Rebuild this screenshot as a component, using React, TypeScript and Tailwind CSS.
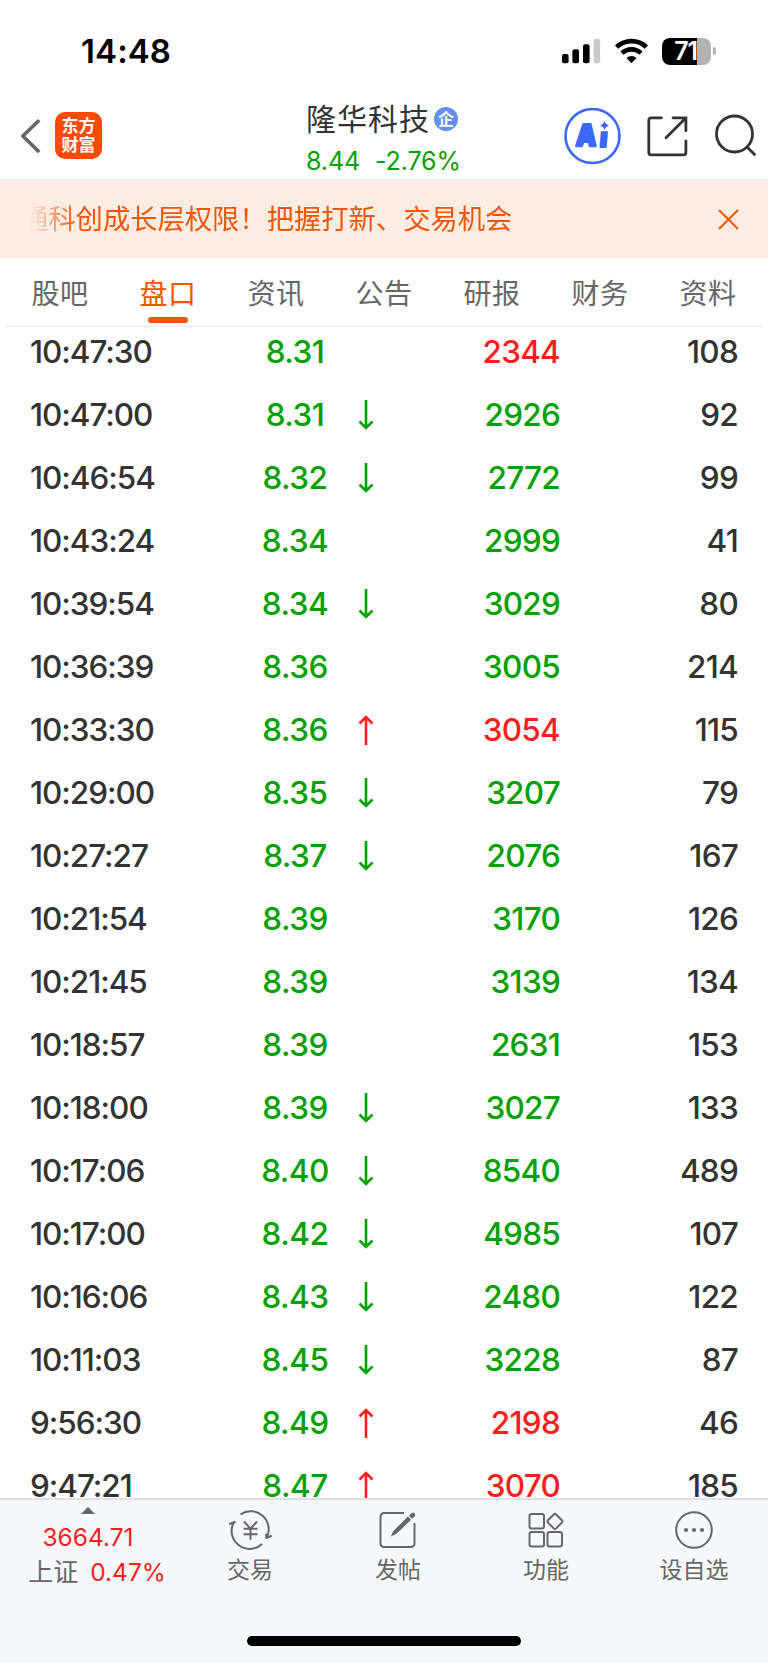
import clsx from "clsx";

type Direction = "up" | "down" | null;

interface Trade {
    time: string;
    price: string;
    direction: Direction;
    volume: string;
    isBuy?: boolean;
    count: string;
}

const trades: Trade[] = [
    { time: "10:47:30", price: "8.31", direction: null, volume: "2344", isBuy: true, count: "108" },
    { time: "10:47:00", price: "8.31", direction: "down", volume: "2926", count: "92" },
    { time: "10:46:54", price: "8.32", direction: "down", volume: "2772", count: "99" },
    { time: "10:43:24", price: "8.34", direction: null, volume: "2999", count: "41" },
    { time: "10:39:54", price: "8.34", direction: "down", volume: "3029", count: "80" },
    { time: "10:36:39", price: "8.36", direction: null, volume: "3005", count: "214" },
    { time: "10:33:30", price: "8.36", direction: "up", volume: "3054", isBuy: true, count: "115" },
    { time: "10:29:00", price: "8.35", direction: "down", volume: "3207", count: "79" },
    { time: "10:27:27", price: "8.37", direction: "down", volume: "2076", count: "167" },
    { time: "10:21:54", price: "8.39", direction: null, volume: "3170", count: "126" },
    { time: "10:21:45", price: "8.39", direction: null, volume: "3139", count: "134" },
    { time: "10:18:57", price: "8.39", direction: null, volume: "2631", count: "153" },
    { time: "10:18:00", price: "8.39", direction: "down", volume: "3027", count: "133" },
    { time: "10:17:06", price: "8.40", direction: "down", volume: "8540", count: "489" },
    { time: "10:17:00", price: "8.42", direction: "down", volume: "4985", count: "107" },
    { time: "10:16:06", price: "8.43", direction: "down", volume: "2480", count: "122" },
    { time: "10:11:03", price: "8.45", direction: "down", volume: "3228", count: "87" },
    { time: "9:56:30", price: "8.49", direction: "up", volume: "2198", isBuy: true, count: "46" },
    { time: "9:47:21", price: "8.47", direction: "up", volume: "3070", isBuy: true, count: "185" },
];

const tabs = ["股吧", "盘口", "资讯", "公告", "研报", "财务", "资料"];

function StatusBar() {
    return (
        <div className="h-24 shrink-0 flex items-start justify-between pl-[81px] pr-[52px] pt-[37px] text-black">
            <span className="text-[33px] leading-[29px] font-semibold tracking-[0.1px]">14:48</span>
            <div className="flex items-center h-7">
                <svg width="39" height="26" viewBox="0 0 39 26">
                    <rect x="0" y="16" width="6.6" height="9.3" rx="2" />
                    <rect x="10.4" y="11.3" width="6.6" height="14" rx="2" />
                    <rect x="21" y="6.2" width="6.6" height="19.1" rx="2" />
                    <rect x="31.5" y="1" width="6.6" height="24.3" rx="2" fill="#cbcbcb" />
                </svg>
                <svg className="ml-[14px]" width="33" height="26" viewBox="0 0 33 26" fill="none" stroke="black" strokeWidth="4.6">
                    <path d="M1.6 9.2a21.4 21.4 0 0 1 29.8 0" />
                    <path d="M7 15.2a13.6 13.6 0 0 1 19 0" />
                    <path d="M16.5 25.2l-5-5.2a7.3 7.3 0 0 1 10 0z" fill="black" stroke="none" />
                </svg>
                <div className="ml-[14px] w-[49px] h-[27px] rounded-[8px] bg-[linear-gradient(90deg,#000_35px,#b2b2b2_35px)] flex items-center justify-center">
                    <span className="text-white text-[25px] leading-[27px] font-semibold tracking-[-1.2px] -ml-[2px]">71</span>
                </div>
                <div className="ml-[2px] w-[3px] h-2 rounded-r-full bg-[#b2b2b2]" />
            </div>
        </div>
    );
}

function Header() {
    return (
        <header className="h-[85px] shrink-0 flex border-b-2 border-[#efeff2] text-[#333]">
            <div className="w-[306px] flex items-start pt-4 pl-5">
                <svg className="mt-1 mr-[13px]" width="22" height="40" viewBox="0 0 22 40" fill="none" stroke="#666" strokeWidth="3.6">
                    <path d="M19.2 4.3L2.8 20l16.4 16" strokeLinejoin="round" />
                </svg>
                <div className="w-[47px] h-[47px] rounded-[10px] bg-[#ff4a03] text-white text-[17px] leading-[19px] font-bold text-center pt-[5px]">
                    东方<br />财富
                </div>
            </div>
            <div className="w-[257px]">
                <div className="flex items-center pt-[2px]">
                    <h1 className="text-[30px] leading-[42px] tracking-[1px]">隆华科技</h1>
                    <span className="ml-1 size-6 rounded-full bg-[#6391eb] text-white text-[16px] leading-6 font-bold text-center">企</span>
                </div>
                <div className="flex gap-[15px] mt-[5px] text-[25px] leading-[32px] text-[#00a100] tracking-[-0.1px]">
                    <span>8.44</span>
                    <span>-2.76%</span>
                </div>
            </div>
            <div className="flex items-start pt-3">
                <svg width="58" height="58" viewBox="0 0 58 58" fill="#3a68ff">
                    <circle cx="29.5" cy="28" r="27" fill="none" stroke="#3a68ff" strokeWidth="2.6" />
                    <text x="0" y="0" fontSize="30" fontWeight="900" stroke="#3a68ff" strokeWidth="2.6" strokeLinejoin="round" transform="translate(12.5 37.7) skewX(-3) scale(.86 1)">A</text>
                    <text x="0" y="0" fontSize="27" fontWeight="900" stroke="#3a68ff" strokeWidth="1.8" strokeLinejoin="round" transform="translate(36 38.6) skewX(-5)">ı</text>
                    <path d="M41.5 12.8Q42.5 16.4 46 17.4Q42.5 18.4 41.5 22Q40.5 18.4 37 17.4Q40.5 16.4 41.5 12.8Z" />
                </svg>
                <svg className="ml-[25px] mt-[7px]" width="43" height="44" viewBox="0 0 43 44" fill="none" stroke="#333" strokeWidth="2.8" strokeLinecap="round">
                    <path d="M15.5 2.8H5a2.2 2.2 0 0 0-2.2 2.2v32.6A2.2 2.2 0 0 0 5 39.8h32.7a2.2 2.2 0 0 0 2.2-2.2V26" />
                    <path d="M27 2.8h12.9v13M39.5 3.3L20 22.7" />
                </svg>
                <svg className="ml-[24px] mt-[6px]" width="44" height="44" viewBox="0 0 44 44" fill="none" stroke="#333" strokeWidth="2.8">
                    <circle cx="21.5" cy="20" r="18" />
                    <path d="M33.5 32.5l8.8 8.800" />
                </svg>
            </div>
        </header>
    );
}

function NoticeBanner() {
    return (
        <div className="h-[77px] shrink-0 bg-[#fdede5] flex items-center justify-between pl-[30px] pr-[29px] text-[#f25600]">
            <div className="overflow-hidden pt-px [mask-image:linear-gradient(90deg,transparent,#000_48px)]">
                <p className="-ml-[9px] text-[27.3px] leading-10 whitespace-nowrap">通科创成长层权限！把握打新、交易机会</p>
            </div>
            <svg width="21" height="21" viewBox="0 0 21 21" stroke="#f25600" strokeWidth="2">
                <path d="M1 1l19 19M20 1L1 20" />
            </svg>
        </div>
    );
}

function TabBar() {
    return (
        <nav className="h-[69px] shrink-0 mx-1.5 flex border-b border-[#e9e9e9]">
            {tabs.map(tab => (
                <div key={tab} className={clsx("flex-1 flex flex-col items-center pt-4", tab === "盘口" ? "text-[#f25600]" : "text-[#666]")}>
                    <span className="text-[28px] leading-[40px] tracking-[0.5px]">{tab}</span>
                    {tab === "盘口" && <span className="mt-[3px] w-10 h-[6px] rounded-full bg-[#f25600]" />}
                </div>
            ))}
        </nav>
    );
}

function Arrow({ direction }: { direction: Direction }) {
    if (!direction) return null;

    return (
        <svg className={clsx(direction === "up" ? "rotate-180 text-[#fa1e1e]" : "text-[#00a100]")} width="16" height="32" viewBox="0 0 16 32" fill="none" stroke="currentColor" strokeWidth="2.6">
            <path d="M8 1v28M1.5 22.5L8 29l6.5-6.5" />
        </svg>
    );
}

function TradeRow({ trade }: { trade: Trade }) {
    return (
        <li className="h-[63px] flex items-center pl-[30px] pr-[30px] text-[31.5px] font-[480] tracking-[-0.75px] text-[#333]">
            <span className="w-[215px] tracking-[-1.05px]">{trade.time}</span>
            <span className="w-[100px] text-center text-[#00a100] tracking-[-0.5px]">{trade.price}</span>
            <span className="w-[42px] flex justify-center"><Arrow direction={trade.direction} /></span>
            <span className={clsx("w-[173px] text-right", trade.isBuy ? "text-[#fa1e1e]" : "text-[#00a100]")}>{trade.volume}</span>
            <span className="flex-1 text-right">{trade.count}</span>
        </li>
    );
}

function NavItem({ label, children }: { label: string, children: React.ReactNode }) {
    return (
        <div className="flex-1 flex flex-col items-center pt-[10px]">
            <svg width="42" height="40" viewBox="0 0 42 40" fill="none" stroke="currentColor" strokeWidth="2" className="overflow-visible">{children}</svg>
            <span className="mt-1 text-[23px] leading-[32px]">{label}</span>
        </div>
    );
}

function BottomBar() {
    return (
        <footer className="h-[165px] shrink-0 border-t-2 border-[#dfe1e4] bg-[#f7f8fb] flex flex-col items-center text-[#666]">
            <div className="flex w-full h-[136px]">
                <div className="w-[176px] flex flex-col items-center pt-[7px]">
                    <svg width="14" height="7" viewBox="0 0 14 7" fill="#666"><path d="M7 0l7 7H0z" /></svg>
                    <span className="mt-[8px] text-[24.5px] leading-[30px] text-[#fa1e1e]">3664.71</span>
                    <div className="flex items-center gap-[12px] pl-[18px] mt-1 leading-[32px]">
                        <span className="text-[25px]">上证</span>
                        <span className="text-[24.5px] text-[#fa1e1e]">0.47%</span>
                    </div>
                </div>
                <NavItem label="交易">
                    <path d="M11.5 4.5A18 18 0 0 1 37.5 28" />
                    <path d="M33 34A18 18 0 0 1 5 12" />
                    <path d="M.2 14.3l6.3-2.5M36.5 28.2l6.3-2.5M37.2 28v-4.5" />
                    <path d="M15 11.5l6.5 7.2 6.5-7.2M14.5 18.7h14M14.5 24.2h14M21.5 18.7v11" />
                </NavItem>
                <NavItem label="发帖">
                    <path d="M27 3H7a3.5 3.5 0 0 0-3.5 3.5v27A3.5 3.5 0 0 0 7 37h27a3.5 3.5 0 0 0 3.5-3.5V13" />
                    <path d="M15 25.3l1.8-4L31 7.3l2.3 2.5L18.8 23.5zM32.8 5.7l2-2a1.5 1.5 0 0 1 2.3 2.3l-2 2z" fill="currentColor" strokeWidth="1.2" />
                </NavItem>
                <NavItem label="功能">
                    <rect x="4.5" y="4" width="14.5" height="14.5" rx="2.2" />
                    <rect x="4.5" y="22" width="14.5" height="14.5" rx="2.2" />
                    <rect x="22.5" y="22" width="14.5" height="14.5" rx="2.2" />
                    <rect x="24.2" y="5.7" width="11.5" height="11.5" rx="1.7" transform="rotate(45 29.95 11.45)" />
                </NavItem>
                <NavItem label="设自选">
                    <circle cx="21" cy="20" r="17.8" />
                    <path d="M13 20h.01M21 20h.01M29 20h.01" strokeWidth="4.2" strokeLinecap="round" />
                </NavItem>
            </div>
            <div className="w-[274px] h-[10px] rounded-full bg-black" />
        </footer>
    );
}

function App() {
    return (
        <div className="w-[768px] h-[1663px] flex flex-col overflow-hidden bg-white font-['Inter','Noto_Sans_CJK_SC',sans-serif]">
            <StatusBar />
            <Header />
            <NoticeBanner />
            <TabBar />
            <ul className="flex-1 min-h-0 overflow-hidden -mt-[7px]">
                {trades.map(trade => <TradeRow key={trade.time} trade={trade} />)}
            </ul>
            <BottomBar />
        </div>
    );
}

export default App;
